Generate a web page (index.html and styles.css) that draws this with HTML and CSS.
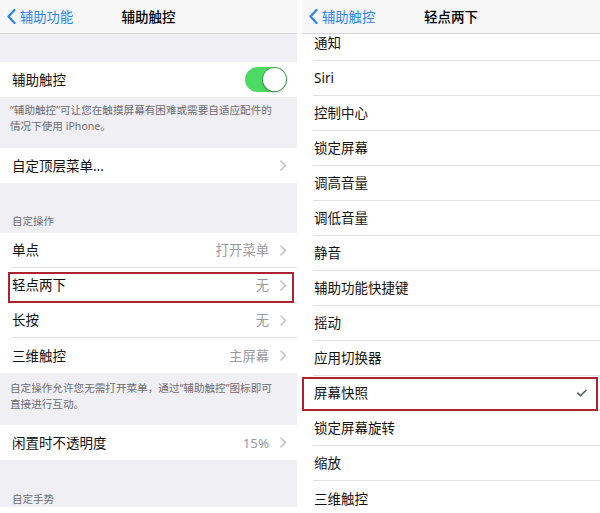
FILE: index.html
```html
<!DOCTYPE html>
<html lang="zh-CN">
<head>
    <meta charset="UTF-8">
    <meta name="viewport" content="width=device-width, initial-scale=1.0">
    <title>辅助触控</title>
    <link rel="stylesheet" href="styles.css">
</head>
<body>
    <div class="screens">
        <section class="phone phone-left">
            <header class="nav">
                <span class="back">
                    <svg class="back-icon" viewBox="0 0 9 15"><polyline points="7.5,1 1.5,7.5 7.5,14"/></svg>辅助功能
                </span>
                <span class="title">辅助触控</span>
                <span></span>
            </header>

            <div class="gap-top"></div>
            <div class="group">
                <div class="row">
                    <div class="row-body">
                        <span class="label">辅助触控</span>
                        <span class="switch"><span class="knob"></span></span>
                    </div>
                </div>
            </div>
            <p class="footer footer-first">“辅助触控”可让您在触摸屏幕有困难或需要自适应配件的<br>情况下使用 iPhone。</p>

            <div class="group">
                <div class="row">
                    <div class="row-body">
                        <span class="label">自定顶层菜单...</span>
                        <svg class="chevron" viewBox="0 0 7 11"><polyline points="1,1 5.5,5.5 1,10"/></svg>
                    </div>
                </div>
            </div>

            <p class="section-head">自定操作</p>
            <div class="group">
                <div class="row">
                    <div class="row-body">
                        <span class="label">单点</span>
                        <span class="value">打开菜单</span>
                        <svg class="chevron" viewBox="0 0 7 11"><polyline points="1,1 5.5,5.5 1,10"/></svg>
                    </div>
                </div>
                <div class="row marked-left">
                    <div class="row-body">
                        <span class="label">轻点两下</span>
                        <span class="value">无</span>
                        <svg class="chevron" viewBox="0 0 7 11"><polyline points="1,1 5.5,5.5 1,10"/></svg>
                    </div>
                </div>
                <div class="row">
                    <div class="row-body">
                        <span class="label">长按</span>
                        <span class="value">无</span>
                        <svg class="chevron" viewBox="0 0 7 11"><polyline points="1,1 5.5,5.5 1,10"/></svg>
                    </div>
                </div>
                <div class="row">
                    <div class="row-body">
                        <span class="label">三维触控</span>
                        <span class="value">主屏幕</span>
                        <svg class="chevron" viewBox="0 0 7 11"><polyline points="1,1 5.5,5.5 1,10"/></svg>
                    </div>
                </div>
            </div>
            <p class="footer footer-second">自定操作允许您无需打开菜单，通过“辅助触控”图标即可<br>直接进行互动。</p>

            <div class="group">
                <div class="row">
                    <div class="row-body">
                        <span class="label">闲置时不透明度</span>
                        <span class="value">15%</span>
                        <svg class="chevron" viewBox="0 0 7 11"><polyline points="1,1 5.5,5.5 1,10"/></svg>
                    </div>
                </div>
            </div>

            <p class="section-head section-last">自定手势</p>
            <div class="group">
                <div class="row">
                    <div class="row-body"></div>
                </div>
            </div>
        </section>

        <section class="phone phone-right">
            <header class="nav">
                <span class="back">
                    <svg class="back-icon" viewBox="0 0 9 15"><polyline points="7.5,1 1.5,7.5 7.5,14"/></svg>辅助触控
                </span>
                <span class="title">轻点两下</span>
                <span></span>
            </header>

            <div class="group list">
                <div class="row"><div class="row-body"><span class="label">通知</span></div></div>
                <div class="row"><div class="row-body"><span class="label">Siri</span></div></div>
                <div class="row"><div class="row-body"><span class="label">控制中心</span></div></div>
                <div class="row"><div class="row-body"><span class="label">锁定屏幕</span></div></div>
                <div class="row"><div class="row-body"><span class="label">调高音量</span></div></div>
                <div class="row"><div class="row-body"><span class="label">调低音量</span></div></div>
                <div class="row"><div class="row-body"><span class="label">静音</span></div></div>
                <div class="row"><div class="row-body"><span class="label">辅助功能快捷键</span></div></div>
                <div class="row"><div class="row-body"><span class="label">摇动</span></div></div>
                <div class="row"><div class="row-body"><span class="label">应用切换器</span></div></div>
                <div class="row marked-right">
                    <div class="row-body">
                        <span class="label">屏幕快照</span>
                        <svg class="check" viewBox="0 0 11 8"><polyline points="1,4.2 3.8,7 10,1"/></svg>
                    </div>
                </div>
                <div class="row"><div class="row-body"><span class="label">锁定屏幕旋转</span></div></div>
                <div class="row"><div class="row-body"><span class="label">缩放</span></div></div>
                <div class="row"><div class="row-body"><span class="label">三维触控</span></div></div>
            </div>
        </section>
    </div>
</body>
</html>
```

FILE: styles.css
```css
body {
    margin: 0;
    padding: 0;
    background-color: #fff;
    color: #111;
    font-family: "Noto Sans", "Noto Sans CJK SC", sans-serif;
}
.screens {
    display: flex;
    gap: 5px;
    height: 513px;
    overflow: hidden;
}
.phone {
    background-color: #efeff4;
    height: 513px;
    overflow: hidden;
}
.phone-left {
    width: 297px;
}
.phone-right {
    flex: 1;
}
.nav {
    position: relative;
    z-index: 1;
    display: grid;
    grid-template-columns: 1fr auto 1fr;
    align-items: center;
    height: 33px;
    background-color: #f7f7f8;
    border-bottom: 1px solid #d6d6da;
}
.back {
    display: flex;
    align-items: center;
    gap: 4px;
    padding-left: 7px;
    color: #2a84e8;
    font-size: 13.3px;
    line-height: 16px;
}
.back-icon {
    width: 9px;
    height: 15px;
    fill: none;
    stroke: #2a84e8;
    stroke-width: 2.2;
    stroke-linecap: round;
    stroke-linejoin: round;
}
.title {
    font-size: 13.5px;
    font-weight: 500;
    line-height: 16px;
    color: #000;
}
.gap-top {
    height: 28px;
}
.group {
    background-color: #fff;
}
.row {
    position: relative;
    padding-left: 11px;
}
.row-body {
    box-sizing: border-box;
    display: flex;
    align-items: center;
    height: 35px;
    padding-right: 10px;
    border-bottom: 1px solid #e2e2e6;
}
.row:last-child .row-body {
    border-bottom: none;
}
.label {
    flex: 1;
    font-size: 13.5px;
    line-height: 16px;
    padding-left: 1px;
}
.value {
    font-size: 13.3px;
    line-height: 16px;
    color: #9a9a9f;
    margin-right: 11px;
}
.chevron {
    width: 7px;
    height: 11px;
    fill: none;
    stroke: #c4c4c9;
    stroke-width: 1.6;
    stroke-linecap: round;
    stroke-linejoin: round;
}
.switch {
    box-sizing: border-box;
    display: flex;
    justify-content: flex-end;
    align-items: center;
    width: 42px;
    height: 25px;
    padding: 1px;
    border-radius: 13px;
    background-color: #4cd964;
}
.knob {
    width: 23px;
    height: 23px;
    border-radius: 50%;
    background-color: #fff;
    box-shadow: 0 0 0 1px rgba(0, 0, 0, 0.22), 0 2px 3px rgba(0, 0, 0, 0.18);
}
.footer {
    margin: 0;
    padding: 5px 10px 14px;
    font-size: 10.6px;
    line-height: 16px;
    color: #6d6d72;
    white-space: nowrap;
}
.footer-second {
    padding: 7px 10px 13px;
}
.section-head {
    margin: 0;
    padding: 32px 12px 5px;
    font-size: 10.5px;
    line-height: 13px;
    color: #6d6d72;
}
.section-last {
    padding: 33px 12px 1px;
}
.list {
    margin-top: -8px;
}
.phone-right .row-body {
    padding-right: 13px;
}
.check {
    width: 10px;
    height: 8px;
    fill: none;
    stroke: #4d5c6e;
    stroke-width: 1.8;
    stroke-linecap: round;
    stroke-linejoin: round;
}
.marked-left::after,
.marked-right::after {
    content: "";
    position: absolute;
    border: 2px solid #ad2430;
}
.marked-left::after {
    left: 8px;
    right: 3px;
    top: 4px;
    bottom: 0;
}
.marked-right::after {
    left: 0;
    right: 2px;
    top: 1px;
    bottom: 0;
}
```
